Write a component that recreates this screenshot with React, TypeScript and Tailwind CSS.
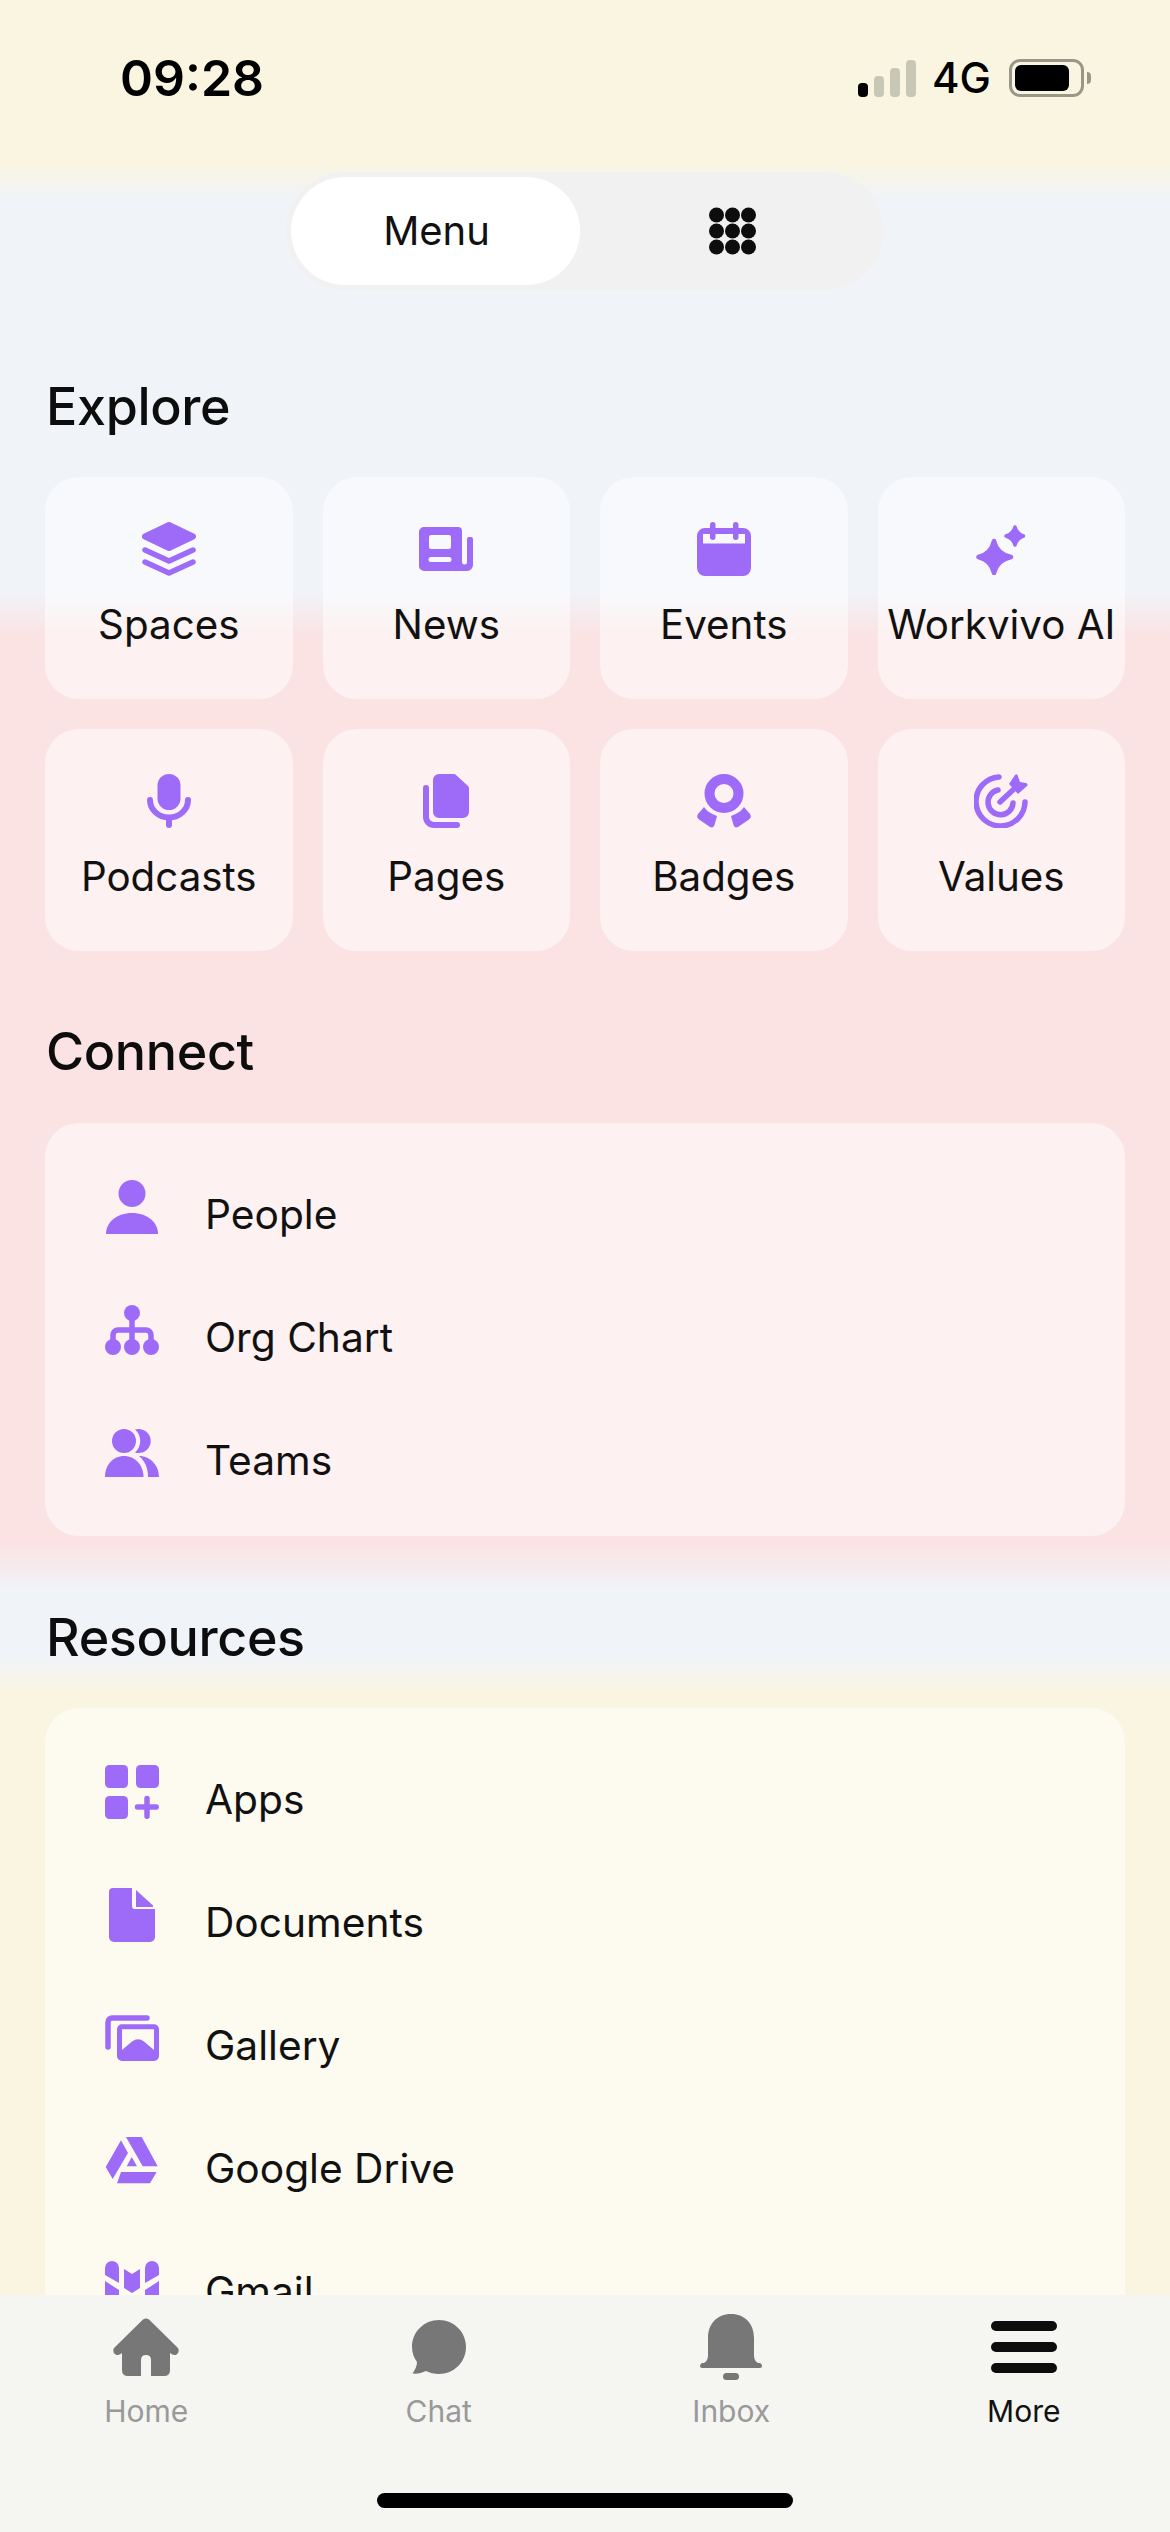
import React from 'react';

const purple = 'fill-[#9d6bf8]';

const SpacesIcon = () => (
  <svg width="54" height="54" viewBox="0 0 54 54" className="fill-[#9d6bf8] stroke-[#9d6bf8]">
    <path d="M27 3 L51 14.5 L27 26 L3 14.5Z" strokeWidth="6" strokeLinejoin="round" />
    <path d="M3 28 L27 39 L51 28 M3 40 L27 51 L51 40" fill="none" strokeWidth="5.5" strokeLinecap="round" strokeLinejoin="round" />
  </svg>
);

const NewsIcon = () => (
  <svg width="54" height="44" viewBox="0 0 54 44" className={purple}>
    <path
      fillRule="evenodd"
      d="M5 0H39a4 4 0 0 1 4 4V35a2.5 2.5 0 0 0 5 0V12a2 2 0 0 1 2-2h2a2 2 0 0 1 2 2V38a6 6 0 0 1-6 6H5a5 5 0 0 1-5-5V5a5 5 0 0 1 5-5ZM12 8a2 2 0 0 0-2 2V20a2 2 0 0 0 2 2H30a2 2 0 0 0 2-2V10a2 2 0 0 0-2-2ZM12 30a2.5 2.5 0 0 0 0 5H30a2.5 2.5 0 0 0 0-5Z"
    />
  </svg>
);

const EventsIcon = () => (
  <svg width="54" height="54" viewBox="0 0 54 54" className={purple}>
    <path fillRule="evenodd" d="M8 6H46a8 8 0 0 1 8 8V46a8 8 0 0 1-8 8H8a8 8 0 0 1-8-8V14a8 8 0 0 1 8-8ZM6 12V21.500H48V12Z" />
    <rect x="13" y="0" width="5.500" height="18" rx="2.750" />
    <rect x="36" y="0" width="5.500" height="18" rx="2.750" />
  </svg>
);

const SparkIcon = () => (
  <svg width="50" height="51" viewBox="0 0 50 51" className="fill-[#9d6bf8] stroke-[#9d6bf8]">
    <path d="M18 17 Q21 30 35 33 Q21 36 18 49 Q15 36 2.500 33 Q15 30 18 17Z" strokeWidth="4.500" strokeLinejoin="round" />
    <path d="M39 3 Q41 10 47.500 12 Q41 14 39 21 Q37 14 30 12 Q37 10 39 3Z" strokeWidth="3.500" strokeLinejoin="round" />
  </svg>
);

const MicIcon = () => (
  <svg width="44" height="54" viewBox="0 0 44 54" className="fill-[#9d6bf8] stroke-[#9d6bf8]">
    <rect x="10.500" y="0" width="23" height="36" rx="11.500" stroke="none" />
    <path d="M3 26 A19 17.500 0 0 0 41 26 M22 44 V51" fill="none" strokeWidth="6" strokeLinecap="round" />
  </svg>
);

const PagesIcon = () => (
  <svg width="46" height="54" viewBox="0 0 46 54" className="fill-[#9d6bf8] stroke-[#9d6bf8]">
    <path d="M16 0H31a3 3 0 0 1 2 1L45 12a3 3 0 0 1 1 2V38a6 6 0 0 1-6 6H16a6 6 0 0 1-6-6V6a6 6 0 0 1 6-6Z" stroke="none" />
    <path d="M3 14V43a8 8 0 0 0 8 8H34" fill="none" strokeWidth="6" strokeLinecap="round" />
  </svg>
);

const BadgeIcon = () => (
  <svg width="54" height="54" viewBox="0 0 54 54" className={purple}>
    <circle cx="27" cy="19.500" r="14.500" fill="none" className="stroke-[#9d6bf8]" strokeWidth="10" />
    <path d="M7 33 Q11 39 20 42 L17.500 51 Q16.500 54.500 13 53 L2 45.500 Q-1 43 1 40 Z" />
    <path d="M47 33 Q43 39 34 42 L36.500 51 Q37.500 54.500 41 53 L52 45.500 Q55 43 53 40 Z" />
  </svg>
);

const ValuesIcon = () => (
  <svg width="54" height="54" viewBox="0 0 54 54" className="stroke-[#9d6bf8]" fill="none">
    <path d="M25 3 A24.500 24.500 0 1 0 51 28" strokeWidth="5.500" strokeLinecap="round" />
    <path d="M24 16 A12.500 12.500 0 1 0 39 29" strokeWidth="5.500" strokeLinecap="round" />
    <path d="M26 28 L40 15" strokeWidth="5.500" strokeLinecap="round" />
    <path d="M35 10 L41 1 Q42.500 -0.500 43.500 1 L46 8 L52 9 Q54.500 10 53 12 L44 20 Z" className="fill-[#9d6bf8]" stroke="none" />
  </svg>
);

const PersonIcon = () => (
  <svg width="54" height="54" viewBox="0 0 54 54" className={purple}>
    <circle cx="27" cy="13.500" r="13.500" />
    <path d="M1 54 C1 42 12 33 27 33 C42 33 53 42 53 54 Z" />
  </svg>
);

const OrgIcon = () => (
  <svg width="54" height="50" viewBox="0 0 54 50" className={purple}>
    <circle cx="27" cy="8" r="8" />
    <circle cx="8" cy="42" r="8" />
    <circle cx="27" cy="42" r="8" />
    <circle cx="46" cy="42" r="8" />
    <path d="M27 8V42M8 40V30a5 5 0 0 1 5-5H41a5 5 0 0 1 5 5V40" fill="none" className="stroke-[#9d6bf8]" strokeWidth="5.500" />
  </svg>
);

const TeamsIcon = () => (
  <svg width="54" height="48" viewBox="0 0 54 48" className={purple}>
    <circle cx="19" cy="12" r="12" />
    <path d="M0 48 C0 36 8 27 19 27 C30 27 38.500 36 38.500 48 Z" />
    <path d="M30 .6 A12 12 0 1 1 30 23.400 A15 15 0 0 0 30 .6Z" />
    <path d="M34 27 C46 27 54 37 54 48 H43 C43 39 40 32 34 27Z" />
  </svg>
);

const AppsIcon = () => (
  <svg width="54" height="54" viewBox="0 0 54 54" className={purple}>
    <rect width="23" height="23" rx="4.500" />
    <rect x="31" width="23" height="23" rx="4.500" />
    <rect y="31" width="23" height="23" rx="4.500" />
    <path d="M42 33.500V51.200M32.500 42H51.200" fill="none" className="stroke-[#9d6bf8]" strokeWidth="5.500" strokeLinecap="round" />
  </svg>
);

const DocIcon = () => (
  <svg width="46" height="54" viewBox="0 0 46 54" className={purple}>
    <path d="M4 0H23V18a3 3 0 0 0 3 3H46V49a5 5 0 0 1-5 5H5a5 5 0 0 1-5-5V4a4 4 0 0 1 4-4Z" />
    <path d="M27 2 L44 17.500 V19 H27Z" />
  </svg>
);

const GalleryIcon = () => (
  <svg width="54" height="46" viewBox="0 0 54 46" className={purple}>
    <path d="M3 32V7a4 4 0 0 1 4-4H42" fill="none" className="stroke-[#9d6bf8]" strokeWidth="5.500" strokeLinecap="round" />
    <path
      fillRule="evenodd"
      d="M17 9.300H49a5 5 0 0 1 5 5V41a5 5 0 0 1-5 5H17a5 5 0 0 1-5-5V14.300a5 5 0 0 1 5-5ZM17 14.300V35L27 26.500Q33 22 39 26.500L49 35V14.300Z"
    />
  </svg>
);

const DriveIcon = () => (
  <svg width="54" height="47" viewBox="0 0 54 47" className={purple}>
    <path d="M16 3.300 L23 16 L7.700 42 L.7 30Z" />
    <path d="M21 0 H36.700 L52.700 29.300 H37.700Z" />
    <path d="M26.700 20 L32 29.300 H21.700Z" />
    <path d="M16 35 H51.700 L45 46.300 H12Z" />
  </svg>
);

const GmailIcon = () => (
  <svg width="54" height="46" viewBox="0 0 54 46" className={purple}>
    <path d="M0 7a7 7 0 0 1 14 0V22L0 14Z" />
    <path d="M0 20 L14 29 V46 H0Z" />
    <path d="M19 8 L27 13 L35 8 V27 L27 32 L19 27Z" />
    <path d="M40 7a7 7 0 0 1 14 0V14L40 22Z" />
    <path d="M54 20 L40 29 V46 H54Z" />
  </svg>
);

const explore = [
  { label: 'Spaces', icon: <SpacesIcon /> },
  { label: 'News', icon: <NewsIcon /> },
  { label: 'Events', icon: <EventsIcon /> },
  { label: 'Workvivo AI', icon: <SparkIcon /> },
  { label: 'Podcasts', icon: <MicIcon /> },
  { label: 'Pages', icon: <PagesIcon /> },
  { label: 'Badges', icon: <BadgeIcon /> },
  { label: 'Values', icon: <ValuesIcon /> },
];

const connect = [
  { label: 'People', icon: <PersonIcon /> },
  { label: 'Org Chart', icon: <OrgIcon /> },
  { label: 'Teams', icon: <TeamsIcon /> },
];

const resources = [
  { label: 'Apps', icon: <AppsIcon /> },
  { label: 'Documents', icon: <DocIcon /> },
  { label: 'Gallery', icon: <GalleryIcon /> },
  { label: 'Google Drive', icon: <DriveIcon /> },
  { label: 'Gmail', icon: <GmailIcon /> },
];

const tabs = [
  {
    label: 'Home',
    icon: (
      <svg width="66" height="58" viewBox="0 0 66 58" className="fill-[#777777]">
        <path d="M30 1.500 Q33 -0.500 36 1.500 L65 30 Q67 34 63.500 36.500 Q60.500 38 57 35 V52 Q57 58 51 58 H38 V42 Q38 37 33 37 Q28 37 28 42 V58 H15 Q9 58 9 52 V35 Q5.500 38 2.500 36.500 Q-1 34 1 30 Z" />
      </svg>
    ),
  },
  {
    label: 'Chat',
    icon: (
      <svg width="54" height="54" viewBox="0 0 54 54" className="fill-[#777777]">
        <path d="M27 0C42 0 54 12 54 27S42 54 27 54C22 54 18 53 14 51C10 53 5 54 .5 53.500C3 50 5 46 5 42C2 38 0 33 0 27C0 12 12 0 27 0Z" />
      </svg>
    ),
  },
  {
    label: 'Inbox',
    icon: (
      <svg width="62" height="66" viewBox="0 0 62 66" className="fill-[#777777]">
        <path d="M31 0C45 0 54 10 54 24V41Q54 47 58 49H60Q62 50 62 52Q62 54 60 54H2Q0 54 0 52Q0 50 2 49H4Q8 47 8 41V24C8 10 17 0 31 0Z" />
        <rect x="23" y="59" width="16" height="7" rx="3.500" />
      </svg>
    ),
  },
  {
    label: 'More',
    active: true,
    icon: (
      <svg width="66" height="52" viewBox="0 0 66 52" className="fill-[#0d0d0d]">
        <rect width="66" height="10" rx="5" />
        <rect y="21" width="66" height="10" rx="5" />
        <rect y="42" width="66" height="10" rx="5" />
      </svg>
    ),
  },
];

const SectionTitle = ({ title, className }: { title: string; className: string }) => (
  <h2 className={`pl-[46px] h-[60px] flex items-center text-[52px] font-medium tracking-[-0.35px] text-[#0d0d0d] ${className}`}>{title}</h2>
);

const ListCard = ({ items }: { items: { label: string; icon: React.ReactNode }[] }) => (
  <div className="mx-[45px] py-[22px] rounded-[34px] bg-white/50">
    {items.map((item) => (
      <div key={item.label} className="h-[123px] flex items-center">
        <div className="w-[54px] ml-[60px] flex justify-center">{item.icon}</div>
        <span className="ml-[46px] pt-[16px] text-[40.7px] text-[#111111]">{item.label}</span>
      </div>
    ))}
  </div>
);

export default function App() {
  return (
    <div className="w-[1170px] h-[2532px] flex flex-col overflow-hidden [font-family:Inter,sans-serif] bg-[linear-gradient(180deg,#faf5e1_162px,#f0f3f8_200px,#f0f3f8_592px,#fbe3e3_635px,#fbe3e3_1545px,#f0f3f8_1590px,#f0f3f8_1656px,#faf5e1_1694px)]">
      <header className="h-[172px] shrink-0 pb-[16px] pl-[120px] pr-[79px] flex items-center justify-between">
        <span className="text-[50px] font-semibold text-black">09:28</span>
        <div className="flex items-center">
          <div className="flex items-end gap-[6px] h-[37px]">
            <div className="w-[10px] h-[14px] rounded-[4px] bg-black" />
            <div className="w-[10px] h-[21px] rounded-[4px] bg-[#c8c6b4]" />
            <div className="w-[10px] h-[29px] rounded-[4px] bg-[#c8c6b4]" />
            <div className="w-[10px] h-[37px] rounded-[4px] bg-[#c8c6b4]" />
          </div>
          <span className="ml-[16px] text-[42px] font-medium leading-none text-black">4G</span>
          <div className="ml-[18px] w-[75px] h-[38px] rounded-[11px] border-[3px] border-[#9a9788] p-[3px]">
            <div className="w-[54px] h-full rounded-[6px] bg-black" />
          </div>
          <div className="ml-[3px] w-[4px] h-[12px] rounded-r-full bg-[#9a9788]" />
        </div>
      </header>

      <main className="flex-1 min-h-0 overflow-hidden">
        <div className="w-[598px] h-[118px] ml-[286px] p-[5px] rounded-full bg-[#f1f1f1] flex">
          <div className="w-[289px] pl-[2px] rounded-full bg-white flex items-center justify-center text-[40px] text-[#111111]">Menu</div>
          <div className="flex-1 pl-[5px] flex items-center justify-center">
            <svg width="47" height="48" viewBox="0 0 47 48" className="fill-[#0d0d0d]">
              {[7.5, 23.5, 39.5].map((y) =>
                [7.5, 23.5, 39.5].map((x) => <circle key={`${x}-${y}`} cx={x} cy={y + 0.5} r="7.500" />),
              )}
            </svg>
          </div>
        </div>

        <SectionTitle title="Explore" className="mt-[87px] mb-[40px]" />
        <div className="mx-[45px] grid grid-cols-4 gap-x-[30px] gap-y-[30px]">
          {explore.map((item) => (
            <div key={item.label} className="h-[222px] rounded-[34px] bg-white/50 flex flex-col items-center">
              <div className="mt-[45px] h-[54px] flex items-center justify-center">{item.icon}</div>
              <span className="mt-[19px] whitespace-nowrap text-[40.3px] text-[#111111]">{item.label}</span>
            </div>
          ))}
        </div>

        <SectionTitle title="Connect" className="mt-[71px] mb-[41px]" />
        <ListCard items={connect} />

        <SectionTitle title="Resources" className="mt-[72px] mb-[40px]" />
        <ListCard items={resources} />
      </main>

      <footer className="h-[237px] shrink-0 bg-[#f5f5f2] flex flex-col items-center">
        <nav className="w-full h-[198px] grid grid-cols-4">
          {tabs.map((tab) => (
            <div key={tab.label} className="flex flex-col items-center">
              <div className="mt-[19px] h-[66px] flex items-center justify-center">{tab.icon}</div>
              <span className={`mt-[9px] text-[30px] ${tab.active ? 'text-[#111111]' : 'text-[#999999]'}`}>{tab.label}</span>
            </div>
          ))}
        </nav>
        <div className="w-[416px] h-[15px] rounded-full bg-black" />
      </footer>
    </div>
  );
}
